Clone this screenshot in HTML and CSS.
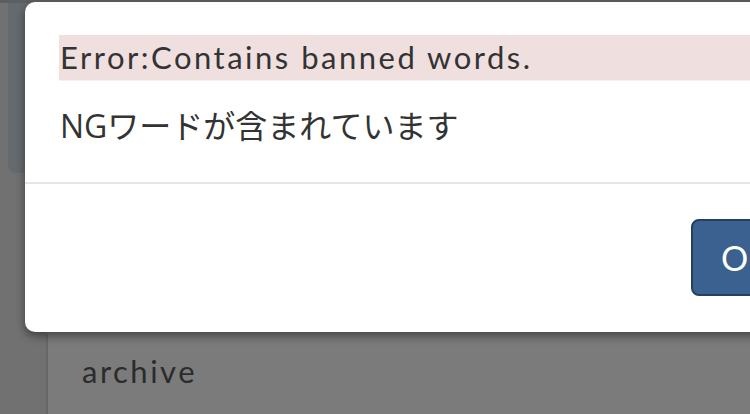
FILE: index.html
```html
<!DOCTYPE html>
<html lang="ja">
<head>
<meta charset="utf-8">
<title>Error</title>
<link rel="stylesheet" href="styles.css">
</head>
<body>
<div class="page">
  <div class="topbar"></div>
  <div class="columns">
    <div class="rail">
      <div class="rail-panel"></div>
    </div>
    <div class="main">
      <div class="archive-card">archive</div>
    </div>
  </div>
</div>
<div class="modal">
  <div class="modal-body">
    <div class="alert">Error:Contains banned words.</div>
    <div class="message">NGワードが含まれています</div>
  </div>
  <div class="modal-footer">
    <button class="btn-ok">OK</button>
  </div>
</div>
</body>
</html>
```
FILE: styles.css
```css
html, body {
  margin: 0;
  padding: 0;
  width: 750px;
  height: 414px;
  overflow: hidden;
}
body {
  background: #7a7a7a;
  font-family: Lato, "Noto Sans CJK JP", sans-serif;
  position: relative;
}
.page {
  display: flex;
  flex-direction: column;
  height: 414px;
}
.topbar {
  height: 3px;
  background: #5b5f63;
}
.columns {
  flex: 1;
  display: flex;
}
.rail {
  width: 46px;
  background: #717171;
  display: flex;
  flex-direction: column;
  padding-left: 8px;
  box-sizing: border-box;
}
.rail-panel {
  height: 170px;
  background: #656a6e;
  border-bottom-left-radius: 8px;
}
.main {
  flex: 1;
  display: flex;
  flex-direction: column;
  justify-content: flex-end;
}
.archive-card {
  height: 80px;
  border-left: 2px solid #676767;
  background: #7b7b7b;
  color: #2b2b2b;
  font-size: 31px;
  letter-spacing: 2.5px;
  padding-left: 34px;
  box-sizing: border-box;
  padding-top: 15px;
  line-height: 44px;
}
.modal {
  position: absolute;
  left: 25px;
  top: 2px;
  width: 760px;
  height: 330px;
  background: #fff;
  border-radius: 10px;
  box-shadow: 0 4px 10px rgba(0, 0, 0, 0.45);
  display: flex;
  flex-direction: column;
}
.modal-body {
  padding: 33px 0 0 34px;
  height: 182px;
  box-sizing: border-box;
  border-bottom: 2px solid #e5e5e5;
}
.alert {
  background: #efdfdf;
  color: #333;
  font-size: 31px;
  letter-spacing: 2.5px;
  line-height: 45px;
  height: 45px;
  padding-left: 1px;
  border-bottom: 1px solid #f6f0f0;
}
.message {
  color: #333;
  font-family: "Open Sans", "Noto Sans CJK JP", sans-serif;
  font-size: 32px;
  line-height: 45px;
  margin-top: 22px;
  padding-left: 1px;
}
.modal-footer {
  flex: 1;
  display: flex;
  align-items: flex-start;
  padding: 35px 0 0 666px;
}
.btn-ok {
  width: 120px;
  height: 77px;
  background: #3a6190;
  border: 2px solid #23405f;
  border-radius: 8px;
  color: #fff;
  font-family: Lato, "Noto Sans CJK JP", sans-serif;
  font-size: 34px;
  letter-spacing: 2px;
  text-align: left;
  padding: 0 0 0 28px;
}
```
